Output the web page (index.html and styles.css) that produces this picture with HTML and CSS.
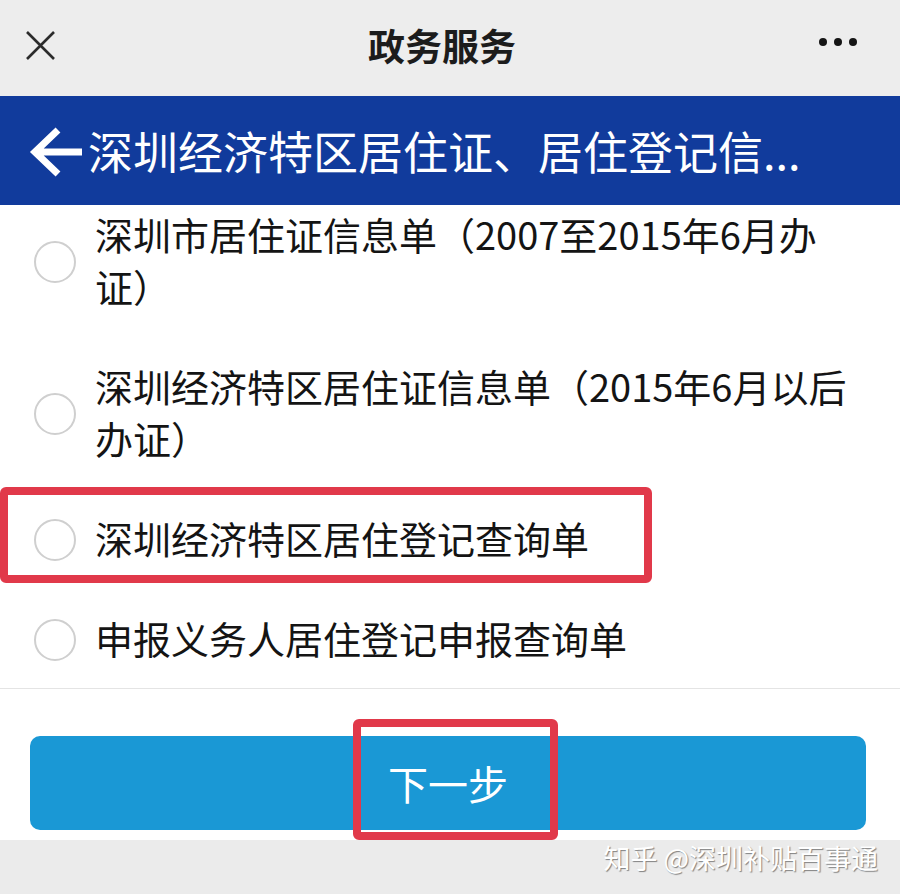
FILE: index.html
```html
<!DOCTYPE html>
<html>
<head>
  <meta charset="utf-8">
  <meta name="viewport" content="width=device-width">
  <title>政务服务</title>
  <link rel="stylesheet" href="styles.css">
</head>
<body>
  <div id="screen">

    <div class="topbar">
      <svg class="closeIcon" width="31" height="31" viewBox="0 0 31 31">
        <path d="M2 2 L29 29 M29 2 L2 29" stroke="#2b2b2b" stroke-width="2.6" fill="none"/>
      </svg>
      <div class="topTitle">政务服务</div>
      <svg class="moreIcon" width="40" height="10" viewBox="0 0 40 10">
        <circle cx="5" cy="5" r="4" fill="#151515"/>
        <circle cx="20" cy="5" r="4" fill="#151515"/>
        <circle cx="35" cy="5" r="4" fill="#151515"/>
      </svg>
    </div>

    <div class="pageHead">
      <svg class="backIcon" width="54" height="50" viewBox="0 0 54 50">
        <path d="M53 25 H7 M29 3 L6 25 L29 47" stroke="#fff" stroke-width="7" fill="none"/>
      </svg>
      <h1>深圳经济特区居住证、居住登记信...</h1>
    </div>

    <ul class="options">
      <li class="option">
        <span class="radio"></span>
        <span class="label">深圳市居住证信息单（2007至2015年6月办证）</span>
      </li>
      <li class="option">
        <span class="radio"></span>
        <span class="label">深圳经济特区居住证信息单（2015年6月以后办证）</span>
      </li>
      <li class="option">
        <span class="radio"></span>
        <span class="label">深圳经济特区居住登记查询单</span>
        <span class="mark markOption"></span>
      </li>
      <li class="option">
        <span class="radio"></span>
        <span class="label">申报义务人居住登记申报查询单</span>
      </li>
    </ul>

    <div class="actions">
      <div class="nextBtn">下一步</div>
      <span class="mark markBtn"></span>
    </div>

    <div class="bottomBar"></div>

    <div class="watermark">知乎 @深圳补贴百事通</div>
  </div>
</body>
</html>
```

FILE: styles.css
```css
* {
  box-sizing: border-box;
}

body {
  margin: 0;
  font-family: "Noto Sans CJK SC", "Noto Sans", sans-serif;
  background: #fff;
}

#screen {
  position: relative;
  width: 900px;
  height: 894px;
  overflow: hidden;
}

/* top bar */
.topbar {
  height: 96px;
  background: #ededed;
  display: flex;
  align-items: center;
  justify-content: space-between;
  padding: 0 42px 0 25px;
}

.closeIcon {
  margin-top: -6px;
}

.topTitle {
  font-size: 37px;
  font-weight: 700;
  color: #1c1c1c;
  line-height: 1;
  margin-left: 10px;
  margin-top: -6px;
}

.moreIcon {
  margin-top: -12px;
}

/* blue page header */
.pageHead {
  height: 109px;
  background: #113b9c;
  display: flex;
  align-items: center;
  padding-left: 29px;
}

.backIcon {
  flex-shrink: 0;
  margin-right: 5px;
  margin-top: 2px;
}

.pageHead h1 {
  margin: 0;
  font-size: 45px;
  font-weight: 400;
  color: #fff;
  line-height: 1;
  white-space: nowrap;
}

/* radio list */
.options {
  margin: 0;
  padding: 0;
  list-style-type: none;
  border-bottom: 1px solid #e4e4e4;
}

.option {
  position: relative;
  display: flex;
  align-items: center;
  padding: 24px 50px 24px 34px;
}

.option:first-child {
  padding-top: 3px;
}

.radio {
  flex-shrink: 0;
  width: 42px;
  height: 42px;
  border: 2px solid #cfcfcf;
  border-radius: 50%;
  margin-right: 19px;
  margin-top: 4px;
}

.label {
  font-size: 38px;
  line-height: 52px;
  color: #141414;
}

/* red annotation frames */
.mark {
  position: absolute;
  border: 8px solid #e1394a;
  border-radius: 6px;
}

.markOption {
  left: 0;
  top: -1px;
  width: 652px;
  height: 96px;
}

.markBtn {
  left: 353px;
  top: 30px;
  width: 205px;
  height: 121px;
}

/* next button */
.actions {
  position: relative;
  background: #fff;
  padding: 47px 34px 10px 30px;
}

.nextBtn {
  height: 94px;
  background: #1a98d5;
  border-radius: 10px;
  color: #fff;
  font-size: 40px;
  display: flex;
  align-items: center;
  justify-content: center;
}

.bottomBar {
  height: 60px;
  background: #ebebeb;
}

.watermark {
  position: absolute;
  right: 22px;
  bottom: 23px;
  font-size: 27px;
  color: #fff;
  line-height: 1;
  text-shadow: 1px 1px 1px rgba(0, 0, 0, 0.45);
}
```
